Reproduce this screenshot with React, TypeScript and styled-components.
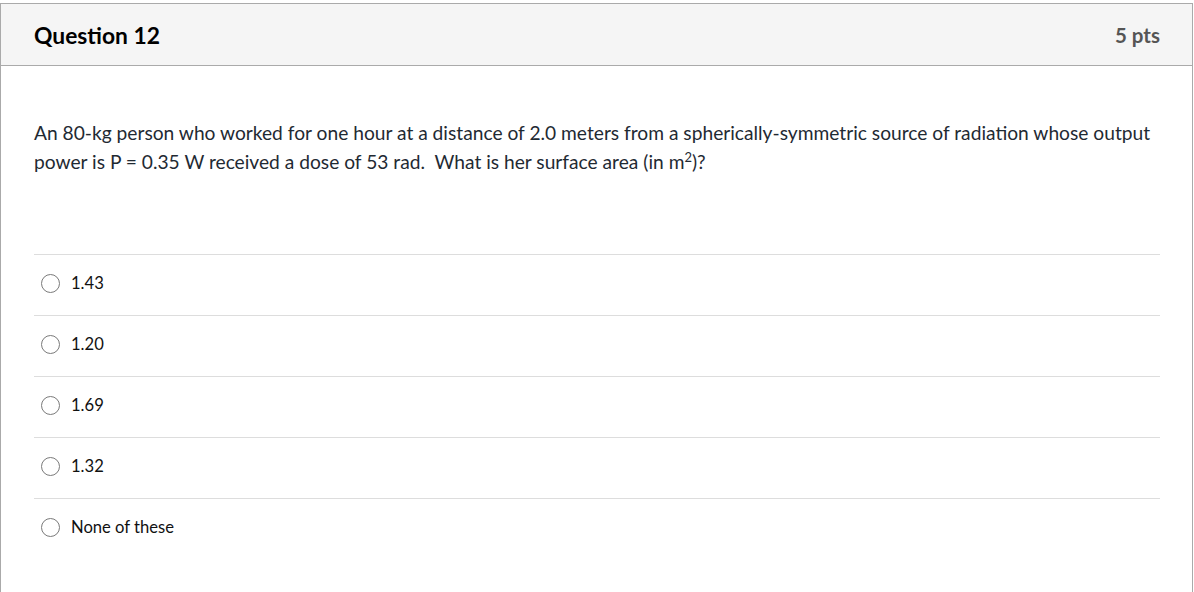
import React from "react";
import styled, { createGlobalStyle } from "styled-components";

const GlobalStyle = createGlobalStyle`
  html, body {
    margin: 0;
    padding: 0;
    background: #ffffff;
  }
  body {
    font-family: Lato, "Noto Sans", sans-serif;
    color: #2d3b45;
  }
`;

const answers = ["1.43", "1.20", "1.69", "1.32", "None of these"];

function App() {
  return (
    <>
      <GlobalStyle />
      <Page>
        <Card>
          <Header>
            <Title>Question 12</Title>
            <Points>5 pts</Points>
          </Header>
          <Body>
            <QuestionText>
              An 80-kg person who worked for one hour at a distance of 2.0 meters
              from a spherically-symmetric source of radiation whose output power
              is P = 0.35 W received a dose of 53 rad.&nbsp; What is her surface
              area (in m<sup>2</sup>)?
            </QuestionText>
            <AnswerList>
              {answers.map((a) => (
                <AnswerRow key={a}>
                  <Radio />
                  <AnswerLabel>{a}</AnswerLabel>
                </AnswerRow>
              ))}
            </AnswerList>
          </Body>
        </Card>
      </Page>
    </>
  );
}

const Page = styled.div`
  padding-top: 3px;
  width: 1194px;
  height: 592px;
  box-sizing: border-box;
  overflow: hidden;
`;

const Card = styled.div`
  width: 1193px;
  box-sizing: border-box;
  border: 1px solid #aaaaaa;
  border-bottom: none;
  min-height: 600px;
`;

const Header = styled.div`
  display: flex;
  align-items: center;
  justify-content: space-between;
  height: 61px;
  padding: 0 32px 0 33px;
  background: #f5f5f5;
  border-bottom: 1px solid #aaaaaa;
`;

const Title = styled.h2`
  margin: 0;
  font-size: 22.8px;
  font-weight: 700;
  color: #000000;
`;

const Points = styled.span`
  font-size: 20.5px;
  font-weight: 700;
  color: #555555;
`;

const Body = styled.div`
  padding: 53px 32px 0 33px;
`;

const QuestionText = styled.p`
  margin: 0;
  font-size: 19.2px;
  line-height: 28.6px;
  color: #1f2a33;

  sup {
    font-size: 13px;
    line-height: 0;
    vertical-align: 7px;
  }
`;

const AnswerList = styled.div`
  margin-top: 78px;
`;

const AnswerRow = styled.div`
  display: flex;
  align-items: center;
  padding-bottom: 4px;
  box-sizing: border-box;
  height: 61px;
  border-top: 1px solid #dddddd;
  padding-left: 7px;
`;

const Radio = styled.span`
  width: 19px;
  height: 19px;
  border: 1.5px solid #7a7a7a;
  border-radius: 50%;
  box-sizing: border-box;
  flex-shrink: 0;
`;

const AnswerLabel = styled.span`
  margin-left: 11px;
  font-size: 16.6px;
  color: #111111;
`;

export default App;
